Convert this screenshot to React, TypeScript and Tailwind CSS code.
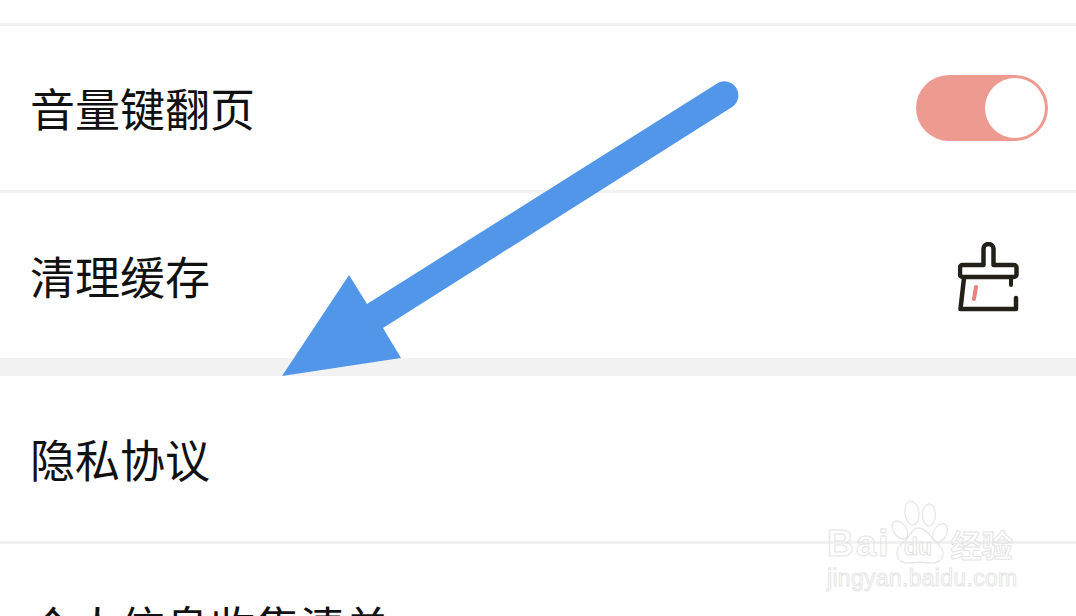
const rowText = "text-[45px] leading-[56px] text-[#111111]";

function BrushIcon() {
  return (
    <svg width="62" height="70" viewBox="0 0 62 70" fill="none" className="mr-[56px] mt-[3px]">
      <path
        d="M25.5 23V7a5 5 0 0 1 10 0v16H56a2.5 2.5 0 0 1 2.5 2.5v7A2.5 2.5 0 0 1 56 35H4.5A2.5 2.5 0 0 1 2 32.5v-7A2.5 2.5 0 0 1 4.5 23z"
        stroke="#222019"
        strokeWidth="4.5"
        strokeLinejoin="round"
      />
      <path d="M6 36 2.5 67H58V56" stroke="#222019" strokeWidth="4.5" strokeLinecap="round" strokeLinejoin="round" />
      <path d="M53 37v6" stroke="#222019" strokeWidth="4" strokeLinecap="round" />
      <path d="M18 45l-2 12" stroke="#e8817a" strokeWidth="4" strokeLinecap="round" />
    </svg>
  );
}

function Toggle() {
  return (
    <div className="mr-[28px] flex h-[66px] w-[132px] items-center justify-end rounded-full bg-[#ed9b91] pr-[3px]">
      <div className="h-[60px] w-[60px] rounded-full bg-white" />
    </div>
  );
}

function Watermark() {
  const outline = "font-['Liberation_Sans',sans-serif] text-transparent [-webkit-text-stroke:1px_#e4e4e4]";
  return (
    <div className="absolute left-[827px] top-[500px] w-[200px]">
      <svg width="58" height="66" viewBox="0 0 58 66" fill="none" stroke="#e6e6e6" strokeWidth="1.3" className="absolute left-[64px] top-0">
        <ellipse cx="21" cy="13" rx="7" ry="12" transform="rotate(-6 21 13)" />
        <ellipse cx="38" cy="15" rx="6.5" ry="11" />
        <ellipse cx="9" cy="30" rx="6.5" ry="10" transform="rotate(-35 9 30)" />
        <ellipse cx="49" cy="33" rx="6.5" ry="10" transform="rotate(30 49 33)" />
        <path d="M28 28c-7 0-9 8-14 13-6 5-9 8-8 14 1 6 7 9 13 8 6-1 12-1 19 0 7 1 13-2 14-8 1-6-3-9-8-14-5-5-9-13-16-13z" />
      </svg>
      <span className={`${outline} absolute left-[77px] top-[33px] text-[23px] font-bold leading-[28px]`}>du</span>
      <div className="flex items-center pt-[24px]">
        <span className={`${outline} text-[37px] font-bold leading-[40px] tracking-[2px]`}>Bai</span>
        <span className="ml-[60px] font-['Noto_Sans_CJK_SC',sans-serif] text-[31px] font-bold leading-[40px] text-transparent [-webkit-text-stroke:1px_#e4e4e4]">
          经验
        </span>
      </div>
      <div className="font-['Liberation_Sans',sans-serif] text-[23px] leading-[28px] tracking-[0.3px] text-white [-webkit-text-stroke:1px_#e6e6e6]">
        jingyan.baidu.com
      </div>
    </div>
  );
}

export default function App() {
  return (
    <div className="relative h-[616px] w-[1076px] overflow-hidden bg-white font-['Noto_Sans_CJK_SC',sans-serif]">
      <div className="h-[26px] border-b-[3px] border-[#f1f1f1]" />
      <div className="flex h-[167px] items-center justify-between border-b-[3px] border-[#f1f1f1] pl-[30px]">
        <span className={rowText}>音量键翻页</span>
        <Toggle />
      </div>
      <div className="flex h-[165px] items-center justify-between pl-[30px]">
        <span className={rowText}>清理缓存</span>
        <BrushIcon />
      </div>
      <div className="h-[18px] bg-[#f2f2f2]" />
      <div className="flex h-[168px] items-center border-b-[3px] border-[#f1f1f1] pl-[30px]">
        <span className={rowText}>隐私协议</span>
      </div>
      <div className="pl-[30px] pt-[54px]">
        <span className={rowText}>个人信息收集清单</span>
      </div>

      <Watermark />

      {/* blue annotation arrow */}
      <svg width="1076" height="616" viewBox="0 0 1076 616" className="absolute inset-0">
        <path
          d="M717.5 83.2A14 14 0 0 1 732.5 106.8L383 328 401 358 282 376 349 275 367 304z"
          fill="#5296ea"
        />
      </svg>
    </div>
  );
}
